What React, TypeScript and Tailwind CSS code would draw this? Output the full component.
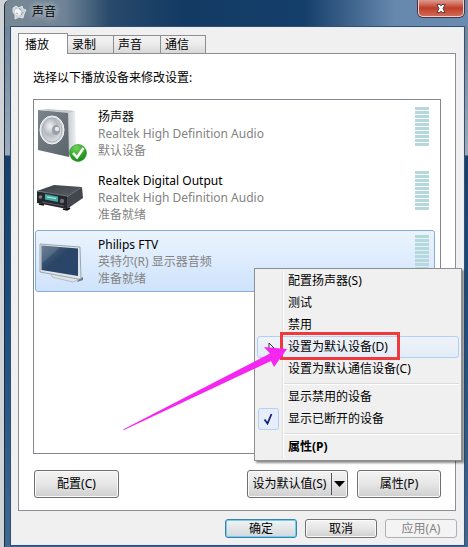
import type { ReactNode } from 'react';

function SpeakerIcon() {
  return (
    <svg width="54" height="60" viewBox="0 0 54 60" aria-hidden="true">
      <defs>
        <linearGradient id="spFace" x1="0" y1="0" x2="1" y2="1">
          <stop offset="0" stopColor="#7b838b" />
          <stop offset="1" stopColor="#5b636b" />
        </linearGradient>
        <linearGradient id="spSide" x1="0" y1="0" x2="1" y2="0">
          <stop offset="0" stopColor="#b4bac2" />
          <stop offset="1" stopColor="#eef1f4" />
        </linearGradient>
        <radialGradient id="spCone" cx="0.4" cy="0.35" r="0.7">
          <stop offset="0" stopColor="#f2f4f6" />
          <stop offset="0.5" stopColor="#b4bac1" />
          <stop offset="1" stopColor="#e2e5e8" />
        </radialGradient>
        <radialGradient id="okFill" cx="0.4" cy="0.2" r="0.8">
          <stop offset="0" stopColor="#6fd35b" />
          <stop offset="1" stopColor="#128a12" />
        </radialGradient>
      </defs>
      <path d="M28 7 L39 8 L40 44 L32 54 Z" fill="url(#spSide)" />
      <path d="M2 7 L32 9 L33 54 L2 47 Z" fill="url(#spFace)" />
      <path d="M2 7 L12 6 L39 8 L32 10 Z" fill="#c3c9cf" />
      <ellipse cx="16" cy="27" rx="12" ry="14" fill="#d7dadd" stroke="#f5f6f7" strokeWidth="1" />
      <ellipse cx="16" cy="27" rx="10" ry="12" fill="url(#spCone)" stroke="#a2a8af" strokeWidth="0.800" />
      <ellipse cx="20" cy="27" rx="4" ry="5" fill="#989fa8" />
      <circle cx="21" cy="26" r="2.200" fill="#e6eaee" />
      <circle cx="42" cy="50" r="8.500" fill="url(#okFill)" stroke="#2f8f2c" strokeWidth="0.600" />
      <path d="M37 50 L41 54.500 L47.500 45" fill="none" stroke="#fff" strokeWidth="2.600" />
    </svg>
  );
}

function ReceiverIcon() {
  return (
    <svg width="54" height="56" viewBox="0 0 54 56" aria-hidden="true">
      <defs>
        <linearGradient id="rcTop" x1="0" y1="0" x2="1" y2="1">
          <stop offset="0" stopColor="#3a3e45" />
          <stop offset="1" stopColor="#5c6168" />
        </linearGradient>
      </defs>
      <path d="M1 24 L18 18 L46 20 L31 30 Z" fill="url(#rcTop)" />
      <path d="M31 30 L46 20 L47 31 L31 42 Z" fill="#42474d" />
      <path d="M1 24 L31 29 L31 42 L1 36 Z" fill="#24272c" />
      <path d="M1 24 L31 29" stroke="#7d848b" strokeWidth="0.800" />
      <path d="M9 27 L22 29.500 L22 35 L9 32.500 Z" fill="#45a9a6" />
      <path d="M11 30 L20 31.500" stroke="#b6f4ec" strokeWidth="1.200" />
      <circle cx="26" cy="34" r="2.200" fill="#6c737b" />
      <circle cx="4.500" cy="30" r="1.800" fill="#777f87" />
      <path d="M6 35 L28 39" stroke="#6f5f62" strokeWidth="0.900" />
      <path d="M3 37 L8 38 M27 42 L31 43 L34 41" stroke="#111" strokeWidth="1.600" />
    </svg>
  );
}

function TvIcon() {
  return (
    <svg width="54" height="56" viewBox="0 0 54 56" aria-hidden="true">
      <defs>
        <linearGradient id="tvScreen" x1="0" y1="0" x2="1" y2="1">
          <stop offset="0" stopColor="#5b7088" />
          <stop offset="0.450" stopColor="#2b4566" />
          <stop offset="1" stopColor="#27456c" />
        </linearGradient>
      </defs>
      <path d="M43 48 L47 46 L47 49 L41 51 Z" fill="#6c7885" />
      <path d="M15 42 L40 47 L42 49 L37 51 L16 46 Z" fill="#dfe4e9" stroke="#97a1ac" strokeWidth="0.600" />
      <path d="M4 13 L44 16 L45 48 L42 48 L4 41 Z" fill="#dfe4e9" stroke="#8b949e" strokeWidth="0.800" />
      <path d="M5.500 14.500 L42 17.500 L42 45 L5.500 39 Z" fill="url(#tvScreen)" />
      <path d="M6 15 L24 16.500 L6 32 Z" fill="#a9bccd" opacity="0.200" />
    </svg>
  );
}

type Device = { name: string; driver: string; status: string; icon: ReactNode; selected?: boolean };

const devices: Device[] = [
  { name: '扬声器', driver: 'Realtek High Definition Audio', status: '默认设备', icon: <SpeakerIcon /> },
  { name: 'Realtek Digital Output', driver: 'Realtek High Definition Audio', status: '准备就绪', icon: <ReceiverIcon /> },
  { name: 'Philips FTV', driver: '英特尔(R) 显示器音频', status: '准备就绪', icon: <TvIcon />, selected: true },
];

function LevelMeter() {
  return (
    <div className="mt-1 flex w-3.5 flex-col gap-px" aria-hidden="true">
      {Array.from({ length: 10 }, (_, i) => (
        <span key={i} className="h-[3px] bg-[#b5d8dc]" />
      ))}
    </div>
  );
}

function DeviceRow({ device }: { device: Device }) {
  return (
    <li
      className={
        device.selected
          ? 'flex h-[62px] items-start rounded-[3px] border border-[#84acdd] bg-linear-to-b from-[#ebf4fe] to-[#cfe3fc] pr-[5px]'
          : 'flex h-[62px] items-start rounded-[3px] border border-transparent pr-[5px]'
      }
      aria-selected={!!device.selected}
      role="option"
    >
      <div className="w-[62px] shrink-0">{device.icon}</div>
      <div className="min-w-0 flex-1 pt-[5px] leading-[17px] text-[#838383]">
        <div className="text-black">{device.name}</div>
        <div>{device.driver}</div>
        <div>{device.status}</div>
      </div>
      <LevelMeter />
    </li>
  );
}

const buttonFace =
  'rounded-[3px] border border-[#707070] bg-linear-to-b from-[#f3f3f3] via-[#e6e6e6] via-50% to-[#cfcfcf] text-black shadow-[inset_0_0_0_1px_#fafafa]';

function MenuItem({ children, checked, active, bold }: { children: ReactNode; checked?: boolean; active?: boolean; bold?: boolean }) {
  return (
    <button
      type="button"
      role="menuitem"
      className={
        'flex h-[22px] w-full items-center rounded-[3px] border text-left ' +
        (active ? 'border-[#aecff7] bg-linear-to-b from-[#eff3f8] to-[#e3ecf7] ' : 'border-transparent ') +
        (bold ? 'font-bold' : '')
      }
    >
      <span className="flex w-[30px] shrink-0 items-center">
        {checked && (
          <svg width="21" height="22" viewBox="0 0 21 22" aria-hidden="true">
            <rect x="0.500" y="0.500" width="20" height="21" rx="2" fill="#e6eff9" stroke="#afd0f7" />
            <path d="M6.500 11.500 L9.500 15.500 L13.500 6" fill="none" stroke="#1c1f7c" strokeWidth="1.800" />
          </svg>
        )}
        {active && (
          <svg className="ml-2.5" width="7" height="10" viewBox="0 0 7 10" aria-hidden="true">
            <path d="M1 1 L1 8 L3 6.500 L4.500 9 M1 1 L6 6 L3 6.500" fill="#fff" stroke="#333" />
          </svg>
        )}
      </span>
      <span>{children}</span>
    </button>
  );
}

function MenuSeparator() {
  return (
    <div role="separator" className="ml-[27px] h-1.5 pt-[3px]">
      <div className="border-t border-[#dcdcdc] bg-white pb-px" />
    </div>
  );
}

function ContextMenu() {
  return (
    <div
      role="menu"
      className="absolute top-[268px] right-1.5 w-52 border border-[#8f8f8f] bg-[#f0f0f0] px-0.5 pt-px pb-0.5 shadow-[2px_2px_2px_rgba(0,0,0,0.45)]"
    >
      <div className="absolute top-0.5 bottom-0.5 left-[27px] w-0.5 border-l border-[#e0e0e0] bg-white" />
      <div className="relative">
        <MenuItem>配置扬声器(S)</MenuItem>
        <MenuItem>测试</MenuItem>
        <MenuItem>禁用</MenuItem>
        <MenuItem active>设置为默认设备(D)</MenuItem>
        <MenuItem>设置为默认通信设备(C)</MenuItem>
        <MenuSeparator />
        <MenuItem>显示禁用的设备</MenuItem>
        <MenuItem checked>显示已断开的设备</MenuItem>
        <MenuSeparator />
        <MenuItem bold>属性(P)</MenuItem>
      </div>
      <div className="pointer-events-none absolute top-[63px] left-[25px] h-7 w-[120px] border-3 border-[#ee3a3c]" />
      <svg className="pointer-events-none absolute top-[75px] -left-[132px]" width="166" height="88" viewBox="0 0 166 88" aria-hidden="true">
        <path d="M0 85.500 L147 9.500 L141 3 L164 5 L151 23 L148 17 L1 86 Z" fill="#f626f2" />
      </svg>
    </div>
  );
}

function TitleBar() {
  return (
    <header className="flex h-[27px] items-start justify-between pl-px">
      <div className="flex items-center gap-[5px] pt-1">
        <svg width="15" height="15" viewBox="0 0 15 15" aria-hidden="true">
          <path d="M1 3 L4 1 L7 3 L10 1 L11 4 L14 5 L12 9 L11 13 L7 12 L3 14 L3 10 L1 7 Z" fill="#c9d0d6" stroke="#eef1f4" strokeWidth="0.800" />
          <path d="M3 5 L6 3.500 L9 6 L8.500 10 L5 10.500 L3 8 Z" fill="#f4f6f7" />
          <path d="M7 3 L9 5.500 M9 10 L11 7 M4 8 L6 9" stroke="#8f9ba7" strokeWidth="0.900" />
        </svg>
        <h1 className="leading-4 text-black [text-shadow:0_0_6px_#ffffffb0,0_0_10px_#ffffff90]">声音</h1>
      </div>
      <button
        type="button"
        aria-label="关闭"
        className="flex h-[17px] w-[46px] items-center justify-center rounded-b-[5px] border border-t-0 border-[#e3d3d6] bg-linear-to-b from-[#dc9b8f] via-[#be3c26] via-50% to-[#d26a55] shadow-[0_0_0_1px_#51303c]"
      >
        <svg width="12" height="11" viewBox="0 0 12 11" aria-hidden="true">
          <path d="M2 1.500 H5 L6 3 L7 1.500 H10 L8 5.500 L10 9.500 H7 L6 8 L5 9.500 H2 L4 5.500 Z" fill="#fff" stroke="#4b3340" strokeWidth="0.900" />
        </svg>
      </button>
    </header>
  );
}

const idleTab =
  'h-[18px] border border-b-0 border-[#8c8e94] bg-linear-to-b from-[#f3f3f3] via-[#ebebeb] via-50% to-[#d8d8d8] pl-1 text-left leading-[18px]';

export default function App() {
  return (
    <div className="relative flex min-h-screen w-full bg-[#d0d3d6] pl-1 font-['Noto_Sans','Noto_Sans_CJK_SC',sans-serif] text-[12px] text-black">
      <div className="flex flex-1 flex-col rounded-tl-md border-l border-[#1c2e42] bg-[linear-gradient(to_bottom,transparent_0_26px,#71849a_26px,#9caabc_155px,#173f6a_156px,#1d4f80_60%,#41678f_100%),linear-gradient(to_right,#788895_0,#6f8396_60px,#28496a_105px,#123a63_180px,#153f6b_300px,#6788ad_390px,#6a8cb2_100%)] pr-1 pl-1.5">
        <TitleBar />
        <main className="flex flex-1 flex-col border border-[#e8edf3] bg-[#f0f0f0] px-1.5 pt-[5px] pb-1.5 shadow-[0_0_0_1px_#34506e]">
          <div role="tablist" className="flex items-end">
            <button type="button" role="tab" aria-selected="true" className="relative z-10 -mb-px h-[21px] w-[50px] border border-b-0 border-[#8c8e94] bg-white pl-1.5 text-left leading-[19px]">
              播放
            </button>
            <button type="button" role="tab" aria-selected="false" className={idleTab + ' w-[46px] border-l-0'}>录制</button>
            <button type="button" role="tab" aria-selected="false" className={idleTab + ' w-[47px] border-l-0'}>声音</button>
            <button type="button" role="tab" aria-selected="false" className={idleTab + ' w-[45px] border-l-0'}>通信</button>
          </div>
          <section role="tabpanel" className="mr-px flex flex-1 flex-col border border-[#8c8e94] bg-white px-3.5 pt-4 pb-3">
            <p id="device-prompt" className="leading-4">选择以下播放设备来修改设置:</p>
            <ul role="listbox" aria-labelledby="device-prompt" className="mt-[13px] flex flex-1 flex-col gap-0.5 border border-[#828790] py-0.5 pr-[5px] pl-px">
              {devices.map((d) => (
                <DeviceRow key={d.name} device={d} />
              ))}
            </ul>
            <div className="mt-4 flex justify-between pl-px">
              <button type="button" className={buttonFace + ' h-7 w-[85px]'}>配置(C)</button>
              <div className="flex gap-[9px]">
                <div className={buttonFace + ' flex h-7 w-[101px] items-center'}>
                  <button type="button" className="h-full flex-1">设为默认值(S)</button>
                  <button type="button" aria-label="更多默认值选项" className="my-0.5 flex h-[22px] w-4 items-center justify-center border-l border-[#555]">
                    <svg width="11" height="6" viewBox="0 0 11 6" aria-hidden="true"><path d="M0 0 H11 L5.500 6 Z" fill="#000" /></svg>
                  </button>
                </div>
                <button type="button" className={buttonFace + ' h-7 w-[84px]'}>属性(P)</button>
              </div>
            </div>
          </section>
          <footer className="mt-2 flex justify-end gap-2">
            <button type="button" className="h-[19px] w-[72px] rounded-[3px] border border-[#3c7fb1] bg-linear-to-b from-[#f3f3f3] to-[#d2d8dc] leading-4 shadow-[inset_0_0_0_1px_#6fd0ee]">确定</button>
            <button type="button" className={buttonFace + ' h-[19px] w-[72px] leading-4'}>取消</button>
            <button type="button" disabled className="h-[19px] w-[72px] rounded-[3px] border border-[#adb2b5] bg-[#f4f4f4] leading-4 text-[#838383]">应用(A)</button>
          </footer>
        </main>
        <div className="h-0.5" />
      </div>
      <ContextMenu />
    </div>
  );
}
